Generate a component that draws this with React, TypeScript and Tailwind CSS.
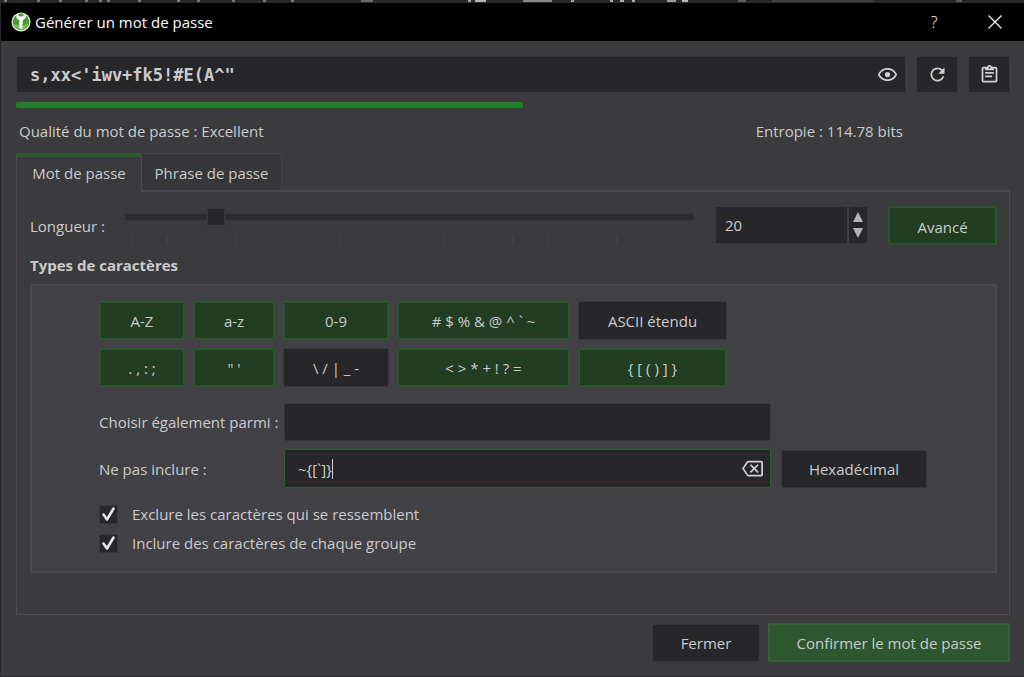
import React, { useState } from "react";

const EYE =
  "M12,9A3,3 0 0,1 15,12A3,3 0 0,1 12,15A3,3 0 0,1 9,12A3,3 0 0,1 12,9M12,4.5C17,4.5 21.27,7.61 23,12C21.27,16.39 17,19.5 12,19.5C7,19.5 2.73,16.39 1,12C2.73,7.61 7,4.5 12,4.5M3.18,12C4.83,15.36 8.24,17.5 12,17.5C15.76,17.5 19.17,15.36 20.82,12C19.17,8.64 15.76,6.5 12,6.5C8.24,6.5 4.83,8.64 3.18,12Z";
const REFRESH =
  "M17.65,6.35C16.2,4.9 14.21,4 12,4A8,8 0 0,0 4,12A8,8 0 0,0 12,20C15.73,20 18.84,17.45 19.73,14H17.65C16.83,16.33 14.61,18 12,18A6,6 0 0,1 6,12A6,6 0 0,1 12,6C13.66,6 15.14,6.69 16.22,7.78L13,11H20V4L17.65,6.35Z";
const CLIPBOARD =
  "M19,3H14.82C14.4,1.84 13.3,1 12,1C10.7,1 9.6,1.84 9.18,3H5A2,2 0 0,0 3,5V19A2,2 0 0,0 5,21H19A2,2 0 0,0 21,19V5A2,2 0 0,0 19,3M12,3A1,1 0 0,1 13,4A1,1 0 0,1 12,5A1,1 0 0,1 11,4A1,1 0 0,1 12,3M7,7H17V5H19V19H5V5H7V7M17,11H7V9H17V11M15,15H7V13H15V15Z";
const BACKSPACE =
  "M19,15.59L17.59,17L14,13.41L10.41,17L9,15.59L12.59,12L9,8.41L10.41,7L14,10.59L17.59,7L19,8.41L15.41,12L19,15.59M22,3A2,2 0 0,1 24,5V19A2,2 0 0,1 22,21H7C6.31,21 5.77,20.64 5.41,20.11L0,12L5.41,3.88C5.77,3.35 6.31,3 7,3H22M22,5H7L2.28,12L7,19H22V5Z";

function Icon({ path }: { path: string }) {
  return (
    <svg viewBox="0 0 24 24" className="size-[21px] fill-[#d0d0d2]" aria-hidden="true">
      <path d={path} />
    </svg>
  );
}

function AppLogo() {
  return (
    <svg viewBox="0 0 40 40" className="size-5" aria-hidden="true">
      <circle cx="20" cy="20" r="19" fill="#e4ece0" />
      <circle cx="20" cy="20" r="16.5" fill="#4d9a33" />
      <path d="M4 23a16.500 16.500 0 0 0 32 0q-16 7-32 0z" fill="#74bf4c" />
      <path
        d="M10 7q0 6 6.500 9.500V31l3.500 4 3.500-4v-3l-2-2 2-2V16.500Q30 13 30 7l-5-3v3.500q-5 3-10 0V4z"
        fill="#f4f8f2"
      />
      <circle cx="20" cy="5.500" r="2.500" fill="#4d9a33" />
    </svg>
  );
}

function BackgroundStrip() {
  const marks = [3, 36, 58, 84, 98, 106, 137, 176, 196, 231, 262, 290];
  return (
    <svg className="h-[3px] w-full bg-[#29292b]" aria-hidden="true">
      {marks.map((x) => (
        <rect key={x} x={x} y="0" width="3" height="2" fill="#77777a" />
      ))}
      <rect x="360" width="12" height="2" fill="#6c6c6e" />
      <rect x="467" width="3" height="2" fill="#aaaaaa" />
      <rect x="474" width="11" height="2" fill="#b4b4b4" />
      <rect x="522" width="29" height="2" fill="#8a8a8c" />
      <rect x="570" width="3" height="2" fill="#9a9a9a" />
      <rect x="609" width="3" height="2" fill="#aaaaaa" />
      <rect x="619" width="4" height="2" fill="#aaaaaa" />
      <rect x="631" width="3" height="2" fill="#aaaaaa" />
      <rect x="666" width="9" height="2" fill="#999999" />
      <rect x="681" width="6" height="2" fill="#bbbbbb" />
      <rect x="737" width="8" height="2" fill="#5c5c5e" />
      <rect x="771" width="102" height="2" fill="#434345" />
      <rect x="955" width="6" height="2" fill="#5c5c5e" />
    </svg>
  );
}

const DARK = "rounded-xs border border-[#38383b] bg-[#272729]";
const GREEN = "rounded-xs border-2 border-[#2c5530] bg-[#223e22]";

const groups = [
  { label: "A-Z", on: true },
  { label: "a-z", on: true },
  { label: "0-9", on: true },
  { label: "# $ % & @ ^ ` ~", on: true },
  { label: "ASCII étendu", on: false },
  { label: ". , : ;", on: true },
  { label: "\" '", on: true },
  { label: "\\ / | _ -", on: false },
  { label: "< > * + ! ? =", on: true },
  { label: "{ [ ( ) ] }", on: true },
];

const ticks = Array.from({ length: 17 }, (_, i) => i);

function Check({ id, label }: { id: string; label: string }) {
  return (
    <div className="flex items-center gap-[14px]">
      <span className="grid size-[19px] place-items-center">
        <input
          id={id}
          type="checkbox"
          defaultChecked
          className="peer col-start-1 row-start-1 size-[19px] appearance-none border border-[#38383b] bg-[#272729]"
        />
        <svg
          viewBox="0 0 19 19"
          className="pointer-events-none invisible col-start-1 row-start-1 size-[19px] peer-checked:visible"
          aria-hidden="true"
        >
          <path
            d="M4.500 9.500L8 14.500L14.500 3.500"
            fill="none"
            stroke="#e6e6e8"
            strokeWidth="2.600"
            strokeLinecap="round"
            strokeLinejoin="round"
          />
        </svg>
      </span>
      <label htmlFor={id}>{label}</label>
    </div>
  );
}

export default function App() {
  const [length, setLength] = useState(20);
  const [exclude, setExclude] = useState("~{[`]}");

  return (
    <div className="flex min-h-screen flex-col border-b border-l border-[#29292b] bg-[#3b3b3d] font-['Open_Sans','Noto_Sans',sans-serif] text-[15px] leading-5 text-[#cbcbcd]">
      <BackgroundStrip />
      <header className="flex h-[38px] items-center bg-black pl-[10px] text-white">
        <AppLogo />
        <h1 className="ml-1 flex-1 text-[15px]">Générer un mot de passe</h1>
        <button type="button" aria-label="Aide" className="h-full w-[62px] text-base font-light">
          ?
        </button>
        <button type="button" aria-label="Fermer la fenêtre" className="flex h-full w-[59px] items-center justify-center">
          <svg viewBox="0 0 14 14" className="size-[14px]" aria-hidden="true">
            <path d="M0.500 0.500L13.500 13.500M13.500 0.500L0.500 13.500" stroke="#f0f0f0" strokeWidth="1.300" />
          </svg>
        </button>
      </header>

      <main className="flex flex-1 flex-col px-[15px] pt-[15px] pr-[14px] pb-[14px]">
        <div className="flex gap-[10px]">
          <div className={`flex h-[37px] flex-1 items-center pr-[7px] pl-[13px] ${DARK}`}>
            <input
              aria-label="Mot de passe généré"
              defaultValue={"s,xx<'iwv+fk5!#E(A^\""}
              spellCheck={false}
              className="min-w-0 flex-1 bg-transparent font-['DejaVu_Sans_Mono',monospace] text-[17px] font-bold outline-none"
            />
            <button type="button" aria-label="Afficher le mot de passe">
              <Icon path={EYE} />
            </button>
          </div>
          <button type="button" aria-label="Régénérer" className={`flex h-[37px] w-[42px] items-center justify-center ${DARK}`}>
            <Icon path={REFRESH} />
          </button>
          <button type="button" aria-label="Copier" className={`flex h-[37px] w-[42px] items-center justify-center ${DARK}`}>
            <Icon path={CLIPBOARD} />
          </button>
        </div>

        <div className="mt-[9px] h-[6px]">
          <div className="h-full w-[51%] rounded-xs bg-[#1f8024]" />
        </div>

        <div className="mt-[13px] flex pr-[107px] pl-[3px]">
          <p className="flex-1">Qualité du mot de passe : Excellent</p>
          <p>Entropie : 114.78 bits</p>
        </div>

        <div role="tablist" className="relative mt-3 flex h-[37px]">
          <button
            type="button"
            role="tab"
            aria-selected="true"
            className="z-10 -mb-[2px] w-[126px] border-x border-t-4 border-x-[#4b4b4d] border-t-[#2d5a2f] bg-[#3b3b3d] pb-[3px]"
          >
            Mot de passe
          </button>
          <button
            type="button"
            role="tab"
            aria-selected="false"
            className="w-[140px] border-t border-r border-[#434345] bg-[#373739] pt-[2px]"
          >
            Phrase de passe
          </button>
        </div>

        <section className="flex flex-1 flex-col border border-t-2 border-[#4b4b4d] px-3 pt-[14px] pb-[41px] pl-[13px]">
          <div className="flex">
            <label htmlFor="length" className="mt-[10px] w-[94px]">
              Longueur :
            </label>
            <div className="flex-1">
              <input
                type="range"
                aria-label="Longueur"
                min={1}
                max={128}
                value={length}
                onChange={(e) => setLength(Number(e.target.value))}
                className="block h-[22px] w-full appearance-none bg-transparent [&::-webkit-slider-runnable-track]:h-2 [&::-webkit-slider-runnable-track]:border [&::-webkit-slider-runnable-track]:border-[#363638] [&::-webkit-slider-runnable-track]:bg-[#2b2b2d] [&::-webkit-slider-thumb]:-mt-[6px] [&::-webkit-slider-thumb]:size-[18px] [&::-webkit-slider-thumb]:appearance-none [&::-webkit-slider-thumb]:border [&::-webkit-slider-thumb]:border-[#38383a] [&::-webkit-slider-thumb]:bg-[#262628]"
              />
              <div className="mt-[9px] flex h-[6px] justify-between px-2">
                {ticks.map((t) => (
                  <span key={t} className="w-px bg-[#454547]" />
                ))}
              </div>
            </div>
            <div className={`ml-[21px] flex h-[38px] w-[153px] ${DARK}`}>
              <input
                id="length"
                type="number"
                value={length}
                onChange={(e) => setLength(Number(e.target.value))}
                className="min-w-0 flex-1 [appearance:textfield] bg-transparent pl-[9px] outline-none [&::-webkit-inner-spin-button]:appearance-none"
              />
              <div className="flex w-5 flex-col items-center justify-center gap-[6px] border-l-2 border-[#3f3f41]">
                <button type="button" aria-label="Augmenter" onClick={() => setLength(length + 1)}>
                  <svg viewBox="0 0 10 10" className="size-[10px] fill-[#b4b4b8]" aria-hidden="true">
                    <path d="M5 0L10 10H0z" />
                  </svg>
                </button>
                <button type="button" aria-label="Diminuer" onClick={() => setLength(length - 1)}>
                  <svg viewBox="0 0 10 10" className="size-[10px] fill-[#b4b4b8]" aria-hidden="true">
                    <path d="M0 0H10L5 10z" />
                  </svg>
                </button>
              </div>
            </div>
            <button type="button" className={`ml-5 h-[39px] w-[109px] pt-[3px] ${GREEN}`}>
              Avancé
            </button>
          </div>

          <h2 className="mt-[10px] font-bold">Types de caractères</h2>

          <div className="mt-[9px] flex-1 rounded-xs border-2 border-[#4b4b4e] bg-[#424146] pt-[15px] pr-[68px] pl-[67px]">
            <div className="grid max-w-[628px] grid-cols-[86fr_82fr_106fr_173fr_149fr] gap-2">
              {groups.map((g) => (
                <button
                  key={g.label}
                  type="button"
                  aria-pressed={g.on}
                  className={`h-[39px] pt-px whitespace-nowrap ${g.on ? GREEN : DARK}`}
                >
                  {g.label}
                </button>
              ))}
            </div>

            <div className="mt-4 flex items-center">
              <label htmlFor="also" className="w-[185px] whitespace-nowrap">
                Choisir également parmi :
              </label>
              <input id="also" className={`h-[38px] min-w-0 flex-1 px-3 outline-none ${DARK}`} />
              <div className="w-[156px]" />
            </div>

            <div className="mt-2 flex items-center">
              <label htmlFor="exclude" className="w-[185px]">
                Ne pas inclure :
              </label>
              <div className="flex h-[39px] min-w-0 flex-1 items-center rounded-xs border border-[#2f5f32] bg-[#272729] pr-[7px] pl-[13px]">
                <input
                  id="exclude"
                  value={exclude}
                  onChange={(e) => setExclude(e.target.value)}
                  spellCheck={false}
                  className="field-sizing-content bg-transparent outline-none"
                />
                <span className="h-5 w-px bg-[#d0d0d2]" />
                <span className="flex-1" />
                <button type="button" aria-label="Effacer" onClick={() => setExclude("")}>
                  <Icon path={BACKSPACE} />
                </button>
              </div>
              <button type="button" className={`ml-[10px] h-[38px] w-[146px] ${DARK}`}>
                Hexadécimal
              </button>
            </div>

            <div className="mt-4 flex flex-col gap-[9px]">
              <Check id="lookalike" label="Exclure les caractères qui se ressemblent" />
              <Check id="every" label="Inclure des caractères de chaque groupe" />
            </div>
          </div>
        </section>

        <footer className="mt-2 flex items-center justify-end gap-2">
          <button type="button" className={`h-[38px] w-[108px] ${DARK}`}>
            Fermer
          </button>
          <button type="button" className="h-[39px] w-[242px] rounded-xs border-2 border-[#356338] bg-[#2f572f]">
            Confirmer le mot de passe
          </button>
        </footer>
      </main>
    </div>
  );
}
